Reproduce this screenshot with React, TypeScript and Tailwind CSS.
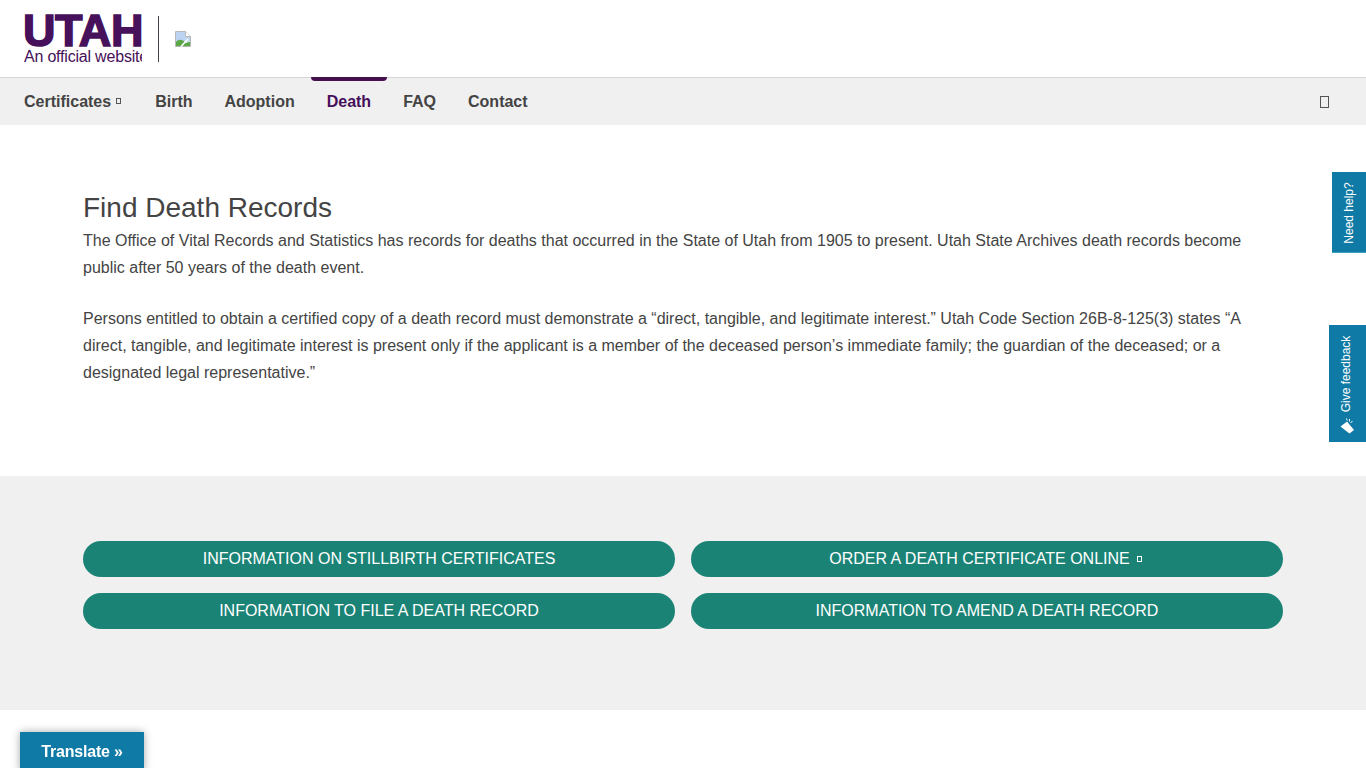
import React from "react";

function NavItem({ label, active, children }: { label: string; active?: boolean; children?: React.ReactNode }) {
  return (
    <a className={`relative flex h-full items-center px-4 text-[16px] font-bold ${active ? "text-[#46105a]" : "text-[#444444]"}`}>
      {active && <span className="absolute left-0 right-0 top-[-1px] h-[4px] rounded-b-[4px] bg-[#46104f]" />}
      {label}
      {children}
    </a>
  );
}

function Pill({ children }: { children: React.ReactNode }) {
  return (
    <a className="flex h-[36px] items-center justify-center rounded-[18px] bg-[#1b8376] text-[16px] text-white">
      {children}
    </a>
  );
}

function BrokenImage() {
  return (
    <svg width="16" height="16" viewBox="0 0 16 16" className="ml-4 shrink-0">
      <path d="M0.5 0.5H10.5L15.5 5.5V15.5H0.5Z" fill="#fff" stroke="#b8b8b8" />
      <path d="M1 1H10V6H15V10L10 12L5 9L1 11Z" fill="#bcd3f2" />
      <path d="M1 15V11C3 8.5 6 8 8 9.5L11 12L15 10.5V15Z" fill="#5aa845" />
      <path d="M10.5 0.5V5.5H15.5" fill="#fff" stroke="#b8b8b8" />
      <path d="M6 15.5L13 8" stroke="#fff" strokeWidth="1.6" />
    </svg>
  );
}

export default function App() {
  return (
    <div className="relative h-[768px] overflow-hidden bg-white font-['Liberation_Sans',Arial,sans-serif] text-[#444444]">
      <header className="flex h-[77px] items-center pl-6">
        <div className="h-[52px] w-[118px] overflow-hidden whitespace-nowrap text-[#46105a]">
          <div className="ml-[-1px] h-[36px] text-[45px] font-bold leading-[36px] tracking-[-0.4px] [-webkit-text-stroke:1.5px_#46105a]">UTAH</div>
          <div className="text-[16px] leading-[15px] tracking-[-0.2px]">An official website</div>
        </div>
        <div className="ml-4 h-[46px] w-px bg-[#46404a]" />
        <BrokenImage />
      </header>

      <nav className="flex h-[48px] items-center justify-between border-t border-[#d6d6d6] bg-[#f0f0f0] pl-2 pr-[37px]">
        <div className="flex h-full items-center">
          <NavItem label="Certificates">
            <span className="mb-[1px] ml-[5px] mr-[2px] inline-block h-[6px] w-[5px] border border-[#555555]" />
          </NavItem>
          <NavItem label="Birth" />
          <NavItem label="Adoption" />
          <NavItem label="Death" active />
          <NavItem label="FAQ" />
          <NavItem label="Contact" />
        </div>
        <span className="inline-block h-[12px] w-[9px] border border-[#555555]" />
      </nav>

      <main className="h-[351px] px-[83px] pr-[120px] pt-[66px]">
        <h1 className="text-[28px] leading-[34px]">Find Death Records</h1>
        <p className="mt-[2px] text-[16px] leading-[27px]">
          The Office of Vital Records and Statistics has records for deaths that occurred in the State of Utah from 1905 to present. Utah State Archives death records become public after 50 years of the death event.
        </p>
        <p className="mt-[24px] text-[16px] leading-[27px]">
          Persons entitled to obtain a certified copy of a death record must demonstrate a “direct, tangible, and legitimate interest.” Utah Code Section 26B-8-125(3) states “A direct, tangible, and legitimate interest is present only if the applicant is a member of the deceased person’s immediate family; the guardian of the deceased; or a designated legal representative.”
        </p>
      </main>

      <section className="h-[234px] bg-[#f0f0f0] px-[83px] pt-[65px]">
        <div className="grid grid-cols-2 gap-x-4 gap-y-4">
          <Pill>INFORMATION ON STILLBIRTH CERTIFICATES</Pill>
          <Pill>
            ORDER A DEATH CERTIFICATE ONLINE
            <span className="mb-[1px] ml-[7px] mr-[3px] inline-block h-[6px] w-[5px] border border-white" />
          </Pill>
          <Pill>INFORMATION TO FILE A DEATH RECORD</Pill>
          <Pill>INFORMATION TO AMEND A DEATH RECORD</Pill>
        </div>
      </section>

      <a className="fixed right-0 top-[172px] flex h-[81px] w-[34px] items-center justify-center border-b border-[#3aa0c4] bg-[#0f7aa5] pt-[2px] text-white">
        <span className="whitespace-nowrap text-[12px] [transform:rotate(-90deg)]">Need help?</span>
      </a>

      <a className="fixed right-0 top-[325px] flex h-[117px] w-[37px] flex-col items-center bg-[#0f7aa5] pt-[10px] text-white">
        <span className="mr-[2px] flex h-[77px] items-center justify-center">
          <span className="whitespace-nowrap text-[12px] [transform:rotate(-90deg)]">Give feedback</span>
        </span>
        <svg width="16" height="16" viewBox="0 0 16 16" fill="#fff" className="ml-[1px] mt-[6px]">
          <path d="M0.5 8.5L7 3.5L14 12L9.5 15.5L5.5 12.5Z" />
          <path d="M6.5 0.5L7.2 2.5M9.5 1L9.5 3.5M12.5 3L10.5 5" stroke="#fff" strokeWidth="1" />
        </svg>
      </a>

      <a className="fixed bottom-[-4px] left-[20px] flex h-[40px] w-[124px] items-center justify-center bg-[#0f7aa5] text-[16px] font-bold tracking-[-0.2px] text-white shadow-[0_0_8px_rgba(0,0,0,0.35)]">
        Translate »
      </a>
    </div>
  );
}
